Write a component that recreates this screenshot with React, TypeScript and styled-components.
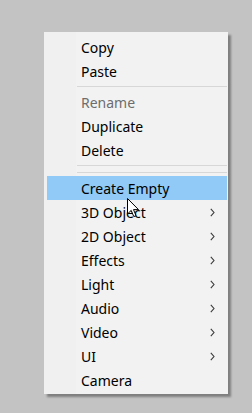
import React from 'react'
import styled, { createGlobalStyle } from 'styled-components'

const Global = createGlobalStyle`
html, body {
  margin: 0;
  padding: 0;
  background: #c3c3c3;
  height: 100%;
}
`

type Item =
  | { kind: 'item'; label: string; sub?: boolean; disabled?: boolean; active?: boolean }
  | { kind: 'sep' }

const items: Item[] = [
  { kind: 'item', label: 'Copy' },
  { kind: 'item', label: 'Paste' },
  { kind: 'sep' },
  { kind: 'item', label: 'Rename', disabled: true },
  { kind: 'item', label: 'Duplicate' },
  { kind: 'item', label: 'Delete' },
  { kind: 'sep' },
  { kind: 'sep' },
  { kind: 'item', label: 'Create Empty', active: true },
  { kind: 'item', label: '3D Object', sub: true },
  { kind: 'item', label: '2D Object', sub: true },
  { kind: 'item', label: 'Effects', sub: true },
  { kind: 'item', label: 'Light', sub: true },
  { kind: 'item', label: 'Audio', sub: true },
  { kind: 'item', label: 'Video', sub: true },
  { kind: 'item', label: 'UI', sub: true },
  { kind: 'item', label: 'Camera' },
]

const App = () => {
  return (
    <Page>
      <Global />
      <Menu>
        {items.map((it, i) =>
          it.kind === 'sep' ? (
            <Separator key={i} />
          ) : (
            <Row key={i} $active={it.active} $disabled={it.disabled}>
              <Label>{it.label}</Label>
              {it.sub && (
                <Chevron viewBox="0 0 5 9" width="5" height="9">
                  <path d="M0.8 0.8 L4 4.5 L0.8 8.2" fill="none" stroke="#3a3a3a" strokeWidth="1.1" />
                </Chevron>
              )}
            </Row>
          )
        )}
        <Cursor viewBox="0 0 12 20" width="12" height="20">
          <path
            d="M0.5 0.5 L0.5 16 L4.2 12.4 L6.8 18.6 L9 17.6 L6.5 11.6 L11.5 11.6 Z"
            fill="#fff"
            stroke="#000"
            strokeWidth="1"
            strokeLinejoin="miter"
          />
        </Cursor>
      </Menu>
    </Page>
  )
}

export default App

const Page = styled.div`
  padding: 32px 0 0 44px;
  font-family: 'Noto Sans', 'Open Sans', sans-serif;
`

const Menu = styled.div`
  position: relative;
  width: 184px;
  box-sizing: border-box;
  padding: 3px 1px 2px 3px;
  background: linear-gradient(to right, #f0f0f0 32px, #f2f2f2 32px);
  box-shadow: 3px 3px 2px rgba(0, 0, 0, 0.35);
  display: flex;
  flex-direction: column;
`

const Row = styled.div<{ $active?: boolean; $disabled?: boolean }>`
  height: 24px;
  box-sizing: border-box;
  display: flex;
  align-items: center;
  padding: 2px 12px 0 34px;
  background: ${p => (p.$active ? '#91c9f7' : 'transparent')};
  color: ${p => (p.$disabled ? '#6d6d6d' : '#000')};
`

const Label = styled.span`
  flex: 1;
  font-size: 14px;
  line-height: 22px;
  white-space: nowrap;
`

const Chevron = styled.svg`
  display: block;
  margin-top: -1px;
`

const Separator = styled.div`
  height: 7px;
  display: flex;
  align-items: center;
  padding-left: 30px;
  &::after {
    content: '';
    flex: 1;
    height: 1px;
    background: #d7d7d7;
  }
`

const Cursor = styled.svg`
  position: absolute;
  left: 83px;
  top: 166px;
`
